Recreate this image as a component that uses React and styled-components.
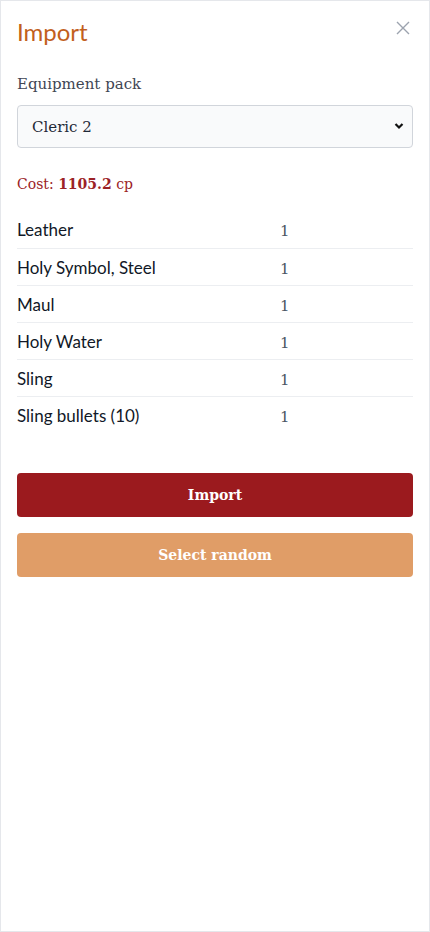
import React from "react";
import styled, { createGlobalStyle } from "styled-components";

const GlobalStyle = createGlobalStyle`
  html, body {
    margin: 0;
    padding: 0;
    background: #ffffff;
  }
  * {
    box-sizing: border-box;
  }
`;

const Panel = styled.div`
  width: 430px;
  height: 932px;
  border: 1px solid #e5e7eb;
  background: #fff;
  padding: 18px 16px;
  display: flex;
  flex-direction: column;
`;

const Header = styled.div`
  display: flex;
  justify-content: space-between;
  align-items: flex-start;
  h1 {
    margin: -1px 0 0;
    font-family: Lato, "Open Sans", sans-serif;
    font-weight: 400;
    font-size: 24px;
    line-height: 28px;
    color: #c25f1d;
  }
`;

const CloseButton = styled.button`
  border: none;
  background: none;
  padding: 0;
  margin: 2px 3px 0 0;
  width: 14px;
  height: 14px;
  color: #9ca3af;
  cursor: pointer;
  svg {
    display: block;
  }
`;

const Label = styled.label`
  display: block;
  margin-top: 26px;
  font-family: "DejaVu Serif", serif;
  font-size: 15px;
  line-height: 24px;
  color: #3f4654;
`;

const SelectWrap = styled.div`
  position: relative;
  margin-top: 9px;
  select {
    width: 100%;
    height: 43px;
    appearance: none;
    border: 1px solid #d1d5db;
    border-radius: 4px;
    background: #f9fafb;
    padding: 0 14px;
    font-family: "DejaVu Serif", serif;
    font-size: 15px;
    color: #1f2937;
  }
  svg {
    position: absolute;
    right: 9px;
    top: 17px;
    pointer-events: none;
  }
`;

const Cost = styled.div`
  margin-top: 24px;
  font-family: "DejaVu Serif", serif;
  font-size: 14px;
  line-height: 24px;
  color: #9b2226;
  b {
    font-weight: 700;
  }
`;

const Table = styled.div`
  margin-top: 15px;
  display: flex;
  flex-direction: column;
`;

const Row = styled.div`
  display: grid;
  grid-template-columns: 263px 1fr;
  align-items: center;
  height: 37px;
  border-top: ${(p) => (p.first ? "none" : "1px solid #eceef1")};
`;

const ItemName = styled.span`
  font-family: Lato, "Open Sans", sans-serif;
  font-size: 17px;
  color: #111827;
`;

const Qty = styled.span`
  font-family: "DejaVu Serif", serif;
  font-size: 15px;
  color: #4b5563;
  padding-top: 3px;
`;

const Actions = styled.div`
  margin-top: 40px;
  display: flex;
  flex-direction: column;
  gap: 16px;
`;

const Button = styled.button`
  height: 44px;
  border: none;
  border-radius: 4px;
  background: ${(p) => p.bg};
  color: #fff;
  font-family: "DejaVu Serif", serif;
  font-weight: 700;
  font-size: 14px;
  cursor: pointer;
`;

const items = [
  "Leather",
  "Holy Symbol, Steel",
  "Maul",
  "Holy Water",
  "Sling",
  "Sling bullets (10)",
];

export default function App() {
  return (
    <>
      <GlobalStyle />
      <Panel>
        <Header>
          <h1>Import</h1>
          <CloseButton aria-label="Close">
            <svg width="14" height="14" viewBox="0 0 14 14">
              <path d="M1 1 L13 13 M13 1 L1 13" stroke="currentColor" strokeWidth="1.4" />
            </svg>
          </CloseButton>
        </Header>

        <Label>Equipment pack</Label>
        <SelectWrap>
          <select defaultValue="cleric2">
            <option value="cleric2">Cleric 2</option>
          </select>
          <svg width="10" height="8" viewBox="0 0 10 8">
            <path d="M1.5 2 L5 5.5 L8.5 2" fill="none" stroke="#111" strokeWidth="2.2" />
          </svg>
        </SelectWrap>

        <Cost>
          Cost: <b>1105.2</b> cp
        </Cost>

        <Table>
          {items.map((name, i) => (
            <Row key={name} first={i === 0}>
              <ItemName>{name}</ItemName>
              <Qty>1</Qty>
            </Row>
          ))}
        </Table>

        <Actions>
          <Button bg="#9b1a1e">Import</Button>
          <Button bg="#e09d67">Select random</Button>
        </Actions>
      </Panel>
    </>
  );
}
